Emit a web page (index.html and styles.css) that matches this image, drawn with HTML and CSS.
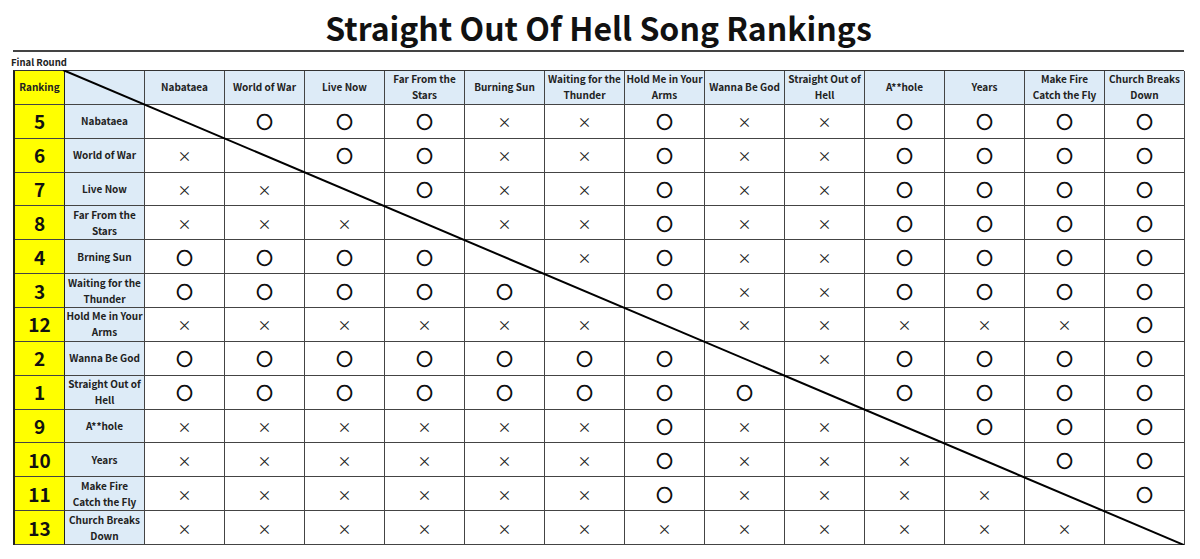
FILE: index.html
```html
<!DOCTYPE html>
<html>
<head>
<meta charset="utf-8">
<link rel="stylesheet" href="styles.css">
</head>
<body>
<div class="page">
  <h1 class="title">Straight Out Of Hell Song Rankings</h1>
  <div class="rule"></div>
  <div class="caption">Final Round</div>
  <div class="table">
    <div class="c rk hd">Ranking</div>
    <div class="c nm"></div>
    <div class="c hd">Nabataea</div>
    <div class="c hd">World of War</div>
    <div class="c hd">Live Now</div>
    <div class="c hd">Far From the<br>Stars</div>
    <div class="c hd">Burning Sun</div>
    <div class="c hd">Waiting for the<br>Thunder</div>
    <div class="c hd">Hold Me in Your<br>Arms</div>
    <div class="c hd">Wanna Be God</div>
    <div class="c hd">Straight Out of<br>Hell</div>
    <div class="c hd">A**hole</div>
    <div class="c hd">Years</div>
    <div class="c hd">Make Fire<br>Catch the Fly</div>
    <div class="c hd">Church Breaks<br>Down</div>

    <div class="c rk num">5</div><div class="c nm">Nabataea</div>
    <div class="c"></div><div class="c o">○</div><div class="c o">○</div><div class="c o">○</div><div class="c x">×</div><div class="c x">×</div><div class="c o">○</div><div class="c x">×</div><div class="c x">×</div><div class="c o">○</div><div class="c o">○</div><div class="c o">○</div><div class="c o">○</div>

    <div class="c rk num">6</div><div class="c nm">World of War</div>
    <div class="c x">×</div><div class="c"></div><div class="c o">○</div><div class="c o">○</div><div class="c x">×</div><div class="c x">×</div><div class="c o">○</div><div class="c x">×</div><div class="c x">×</div><div class="c o">○</div><div class="c o">○</div><div class="c o">○</div><div class="c o">○</div>

    <div class="c rk num">7</div><div class="c nm">Live Now</div>
    <div class="c x">×</div><div class="c x">×</div><div class="c"></div><div class="c o">○</div><div class="c x">×</div><div class="c x">×</div><div class="c o">○</div><div class="c x">×</div><div class="c x">×</div><div class="c o">○</div><div class="c o">○</div><div class="c o">○</div><div class="c o">○</div>

    <div class="c rk num">8</div><div class="c nm">Far From the<br>Stars</div>
    <div class="c x">×</div><div class="c x">×</div><div class="c x">×</div><div class="c"></div><div class="c x">×</div><div class="c x">×</div><div class="c o">○</div><div class="c x">×</div><div class="c x">×</div><div class="c o">○</div><div class="c o">○</div><div class="c o">○</div><div class="c o">○</div>

    <div class="c rk num">4</div><div class="c nm">Brning Sun</div>
    <div class="c o">○</div><div class="c o">○</div><div class="c o">○</div><div class="c o">○</div><div class="c"></div><div class="c x">×</div><div class="c o">○</div><div class="c x">×</div><div class="c x">×</div><div class="c o">○</div><div class="c o">○</div><div class="c o">○</div><div class="c o">○</div>

    <div class="c rk num">3</div><div class="c nm">Waiting for the<br>Thunder</div>
    <div class="c o">○</div><div class="c o">○</div><div class="c o">○</div><div class="c o">○</div><div class="c o">○</div><div class="c"></div><div class="c o">○</div><div class="c x">×</div><div class="c x">×</div><div class="c o">○</div><div class="c o">○</div><div class="c o">○</div><div class="c o">○</div>

    <div class="c rk num">12</div><div class="c nm">Hold Me in Your<br>Arms</div>
    <div class="c x">×</div><div class="c x">×</div><div class="c x">×</div><div class="c x">×</div><div class="c x">×</div><div class="c x">×</div><div class="c"></div><div class="c x">×</div><div class="c x">×</div><div class="c x">×</div><div class="c x">×</div><div class="c x">×</div><div class="c o">○</div>

    <div class="c rk num">2</div><div class="c nm">Wanna Be God</div>
    <div class="c o">○</div><div class="c o">○</div><div class="c o">○</div><div class="c o">○</div><div class="c o">○</div><div class="c o">○</div><div class="c o">○</div><div class="c"></div><div class="c x">×</div><div class="c o">○</div><div class="c o">○</div><div class="c o">○</div><div class="c o">○</div>

    <div class="c rk num">1</div><div class="c nm">Straight Out of<br>Hell</div>
    <div class="c o">○</div><div class="c o">○</div><div class="c o">○</div><div class="c o">○</div><div class="c o">○</div><div class="c o">○</div><div class="c o">○</div><div class="c o">○</div><div class="c"></div><div class="c o">○</div><div class="c o">○</div><div class="c o">○</div><div class="c o">○</div>

    <div class="c rk num">9</div><div class="c nm">A**hole</div>
    <div class="c x">×</div><div class="c x">×</div><div class="c x">×</div><div class="c x">×</div><div class="c x">×</div><div class="c x">×</div><div class="c o">○</div><div class="c x">×</div><div class="c x">×</div><div class="c"></div><div class="c o">○</div><div class="c o">○</div><div class="c o">○</div>

    <div class="c rk num">10</div><div class="c nm">Years</div>
    <div class="c x">×</div><div class="c x">×</div><div class="c x">×</div><div class="c x">×</div><div class="c x">×</div><div class="c x">×</div><div class="c o">○</div><div class="c x">×</div><div class="c x">×</div><div class="c x">×</div><div class="c"></div><div class="c o">○</div><div class="c o">○</div>

    <div class="c rk num">11</div><div class="c nm">Make Fire<br>Catch the Fly</div>
    <div class="c x">×</div><div class="c x">×</div><div class="c x">×</div><div class="c x">×</div><div class="c x">×</div><div class="c x">×</div><div class="c o">○</div><div class="c x">×</div><div class="c x">×</div><div class="c x">×</div><div class="c x">×</div><div class="c"></div><div class="c o">○</div>

    <div class="c rk num">13</div><div class="c nm">Church Breaks<br>Down</div>
    <div class="c x">×</div><div class="c x">×</div><div class="c x">×</div><div class="c x">×</div><div class="c x">×</div><div class="c x">×</div><div class="c x">×</div><div class="c x">×</div><div class="c x">×</div><div class="c x">×</div><div class="c x">×</div><div class="c x">×</div><div class="c"></div>

    <svg class="diag" viewBox="0 0 1171 475" preserveAspectRatio="none" aria-hidden="true">
      <line x1="50" y1="0" x2="1171" y2="475" stroke="#000" stroke-width="2"/>
    </svg>
  </div>
</div>
</body>
</html>
```

FILE: styles.css
```css
* { box-sizing: border-box; }
html, body { margin: 0; padding: 0; background: #fff; }
body {
  width: 1200px;
  height: 559px;
  overflow: hidden;
  font-family: "Noto Sans CJK JP", "Noto Sans", sans-serif;
  color: #1a1a1a;
}
.page {
  margin-left: 13px;
  width: 1171px;
  display: flex;
  flex-direction: column;
}
.title {
  margin: 5px 0 0;
  height: 44px;
  line-height: 44px;
  font-size: 32px;
  font-weight: 700;
  text-align: center;
  color: #111;
  letter-spacing: 0;
}
.rule {
  height: 2px;
  background: #444;
  margin-top: 1px;
}
.caption {
  font-size: 9.5px;
  font-weight: 700;
  line-height: 14px;
  height: 18px;
  padding-top: 3px;
  margin-left: -2px;
  color: #222;
}
.table {
  position: relative;
  display: grid;
  grid-template-columns: 50px 80px repeat(13, 80px);
  grid-template-rows: repeat(14, 1fr);
  height: 475px;
  border-left: 2px solid #222;
  border-top: 1px solid #333;
}
.c {
  border-right: 1px solid #444;
  border-bottom: 1px solid #444;
  display: flex;
  align-items: center;
  justify-content: center;
  text-align: center;
  background: #fff;
  font-size: 10px;
  font-weight: 700;
  line-height: 16px;
  color: #222;
}
.hd, .nm { background: #ddebf7; }
.rk { background: #ffff00; border-right: 1.5px solid #222; }
.rk.hd { background: #ffff00; }
.num { font-size: 19px; font-weight: 700; color: #111; }
.o {
  font-size: 16px;
  font-weight: 700;
  color: #111;
  -webkit-text-stroke: 1.1px #111;
}
.x {
  font-size: 14px;
  font-weight: 400;
  color: #222;
}
.diag {
  position: absolute;
  left: -2px;
  top: -1px;
  width: 1171px;
  height: 475px;
  pointer-events: none;
}
```
